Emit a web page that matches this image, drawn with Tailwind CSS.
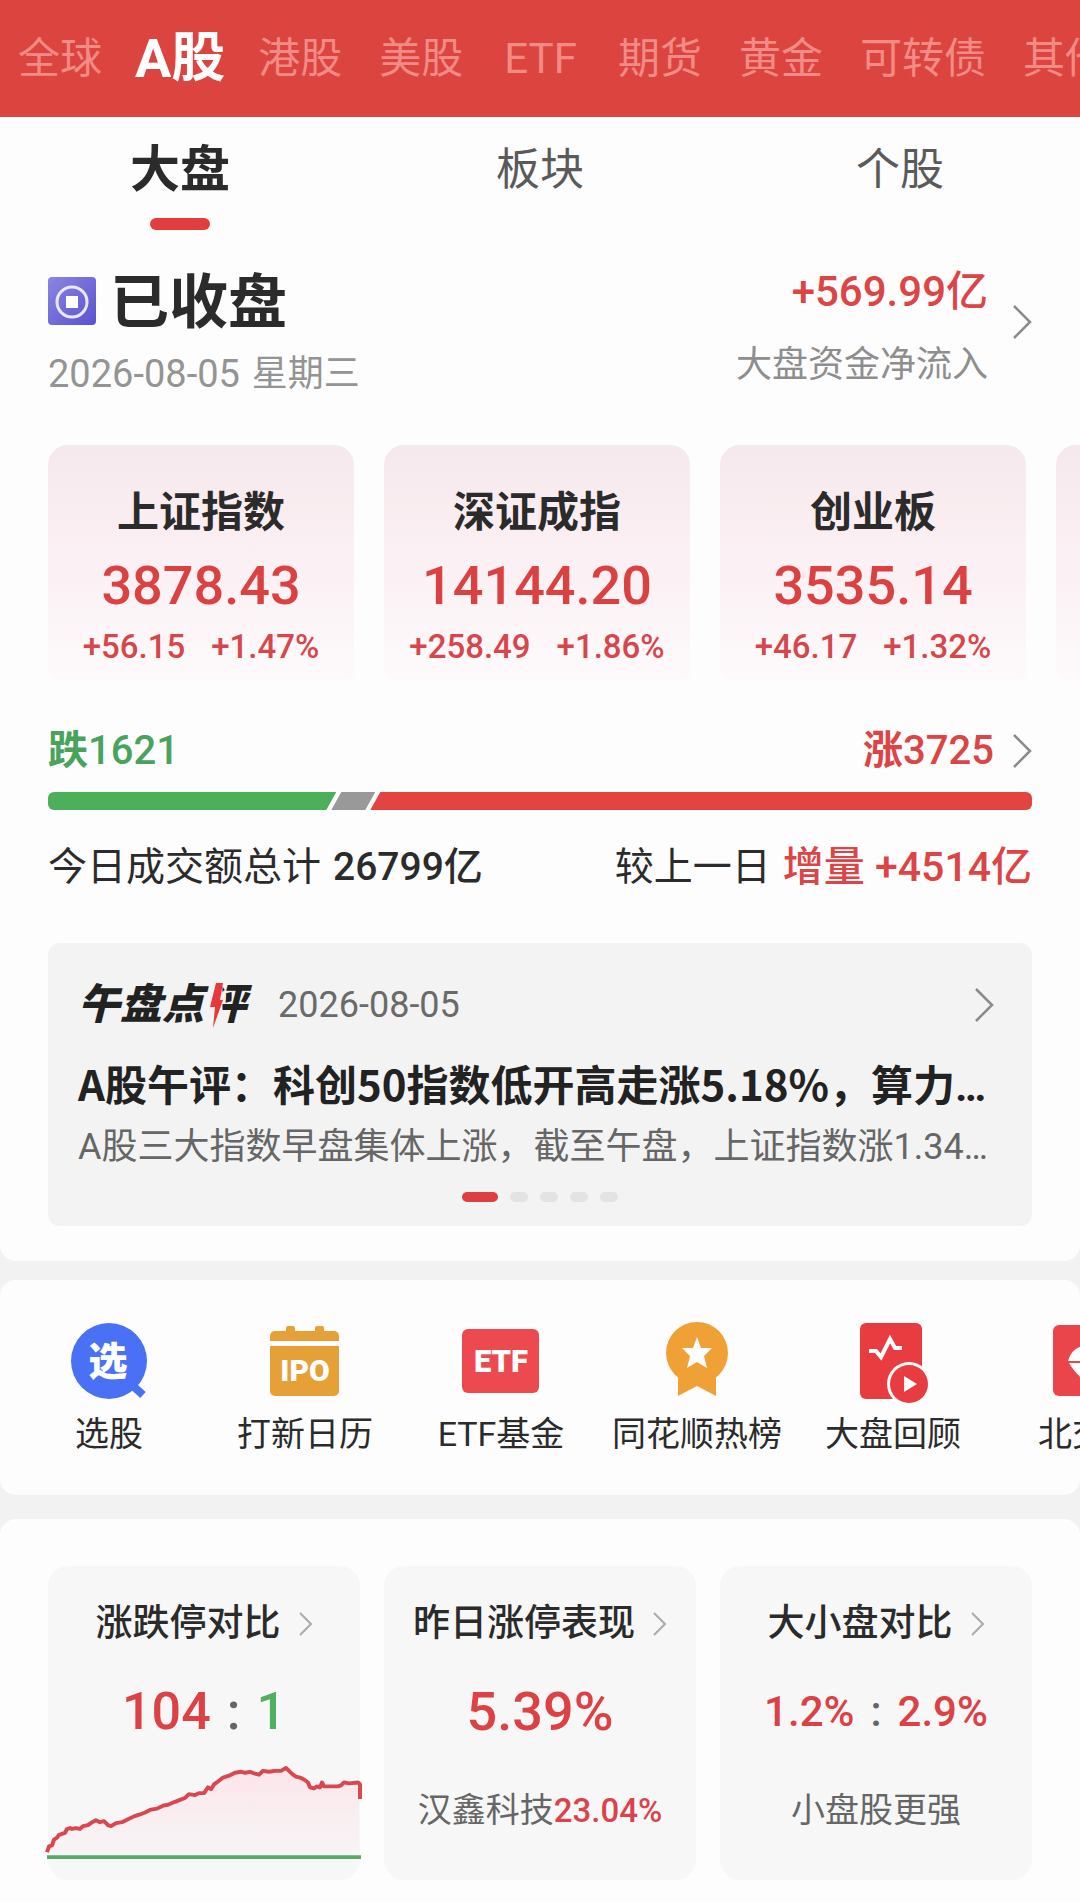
<!DOCTYPE html>
<html lang="zh-CN">
<head>
  <meta charset="UTF-8">
  <meta name="viewport" content="width=device-width, initial-scale=1.0">
  <title>A股行情</title>
  <script src="https://cdn.jsdelivr.net/npm/@tailwindcss/browser@4"></script>
</head>

<body class="min-h-screen bg-[#f2f2f2] text-[#2b2b2b] font-[Roboto,'Noto_Sans_CJK_SC',sans-serif] overflow-x-hidden">

  <!-- market nav -->
  <nav class="h-[117px] bg-[#dc4440] pl-[18px] flex items-center gap-[37px] overflow-hidden whitespace-nowrap text-[42px] text-[#f28b85]">
    <a href="#" class="shrink-0">全球</a>
    <a href="#" class="shrink-0 -mx-1 text-[54px] font-bold text-white">A股</a>
    <a href="#" class="shrink-0">港股</a>
    <a href="#" class="shrink-0">美股</a>
    <a href="#" class="shrink-0 px-1">ETF</a>
    <a href="#" class="shrink-0">期货</a>
    <a href="#" class="shrink-0">黄金</a>
    <a href="#" class="shrink-0">可转债</a>
    <a href="#" class="shrink-0">其他</a>
  </nav>

  <main>
    <section class="bg-[#fdfdfd] rounded-b-2xl pb-[35px]">
      <!-- tabs -->
      <div class="grid grid-cols-3 pt-[23px]">
        <button type="button" class="flex flex-col items-center text-[50px] leading-[60px] font-bold">
          大盘
          <span class="mt-[18px] w-[60px] h-3 rounded-full bg-[#e33e3d]"></span>
        </button>
        <button type="button" class="self-start text-[44px] leading-[60px] text-[#5a5a5a]">板块</button>
        <button type="button" class="self-start text-[44px] leading-[60px] text-[#5a5a5a]">个股</button>
      </div>

      <!-- market status -->
      <div class="px-12 pt-[38px] flex items-start justify-between">
        <div>
          <div class="flex items-center gap-[14px]">
            <svg class="w-12 h-[52px] pb-1" viewBox="0 0 48 48" fill="none">
              <defs>
                <linearGradient id="coin" x1="0" y1="0" x2="1" y2="1">
                  <stop offset="0" stop-color="#8a86e2"/>
                  <stop offset="1" stop-color="#5a52cf"/>
                </linearGradient>
              </defs>
              <rect width="48" height="48" rx="4" fill="url(#coin)"/>
              <circle cx="24" cy="25" r="15" stroke="#e9e8fb" stroke-width="3"/>
              <rect x="18" y="19" width="12" height="12" fill="#fff"/>
            </svg>
            <h1 class="text-[59px] leading-[70px] font-bold">已收盘</h1>
          </div>
          <p class="mt-4 flex gap-3 text-[38px] leading-10 text-[#949494]">
            <span>2026-08-05</span>
            <span class="text-[36px]">星期三</span>
          </p>
        </div>
        <a href="#" class="flex items-start gap-[25px]">
          <span class="block text-right">
            <span class="block text-[42px] leading-[48px] font-medium text-[#dc4446]">+569.99亿</span>
            <span class="block mt-[29px] text-[36px] leading-10 text-[#8e8e8e]">大盘资金净流入</span>
          </span>
          <svg class="mt-[37px] w-[19px] h-[34px]" viewBox="0 0 19 34" fill="none" stroke="#8a8a8a" stroke-width="2.5"><path d="M1 1l16 16L1 33"/></svg>
        </a>
      </div>

      <!-- index cards -->
      <div class="mt-[51px] pl-12 flex gap-[30px] overflow-hidden text-center">
        <a href="#" class="shrink-0 w-[306px] pt-[43px] pb-[13px] rounded-t-[20px] rounded-b-lg bg-linear-to-b from-[#f6e9ed] via-[#fbf0f3] to-[#fdfafb]">
          <h2 class="text-[42px] leading-[50px] font-bold">上证指数</h2>
          <p class="mt-[18px] text-[54px] leading-[60px] font-medium text-[#dc4142]">3878.43</p>
          <p class="mt-[11px] flex justify-center gap-[26px] text-[33px] leading-10 font-medium text-[#d6474c]"><span>+56.15</span><span>+1.47%</span></p>
        </a>
        <a href="#" class="shrink-0 w-[306px] pt-[43px] pb-[13px] rounded-t-[20px] rounded-b-lg bg-linear-to-b from-[#f6e9ed] via-[#fbf0f3] to-[#fdfafb]">
          <h2 class="text-[42px] leading-[50px] font-bold">深证成指</h2>
          <p class="mt-[18px] text-[54px] leading-[60px] font-medium text-[#dc4142]">14144.20</p>
          <p class="mt-[11px] flex justify-center gap-[26px] text-[33px] leading-10 font-medium text-[#d6474c]"><span>+258.49</span><span>+1.86%</span></p>
        </a>
        <a href="#" class="shrink-0 w-[306px] pt-[43px] pb-[13px] rounded-t-[20px] rounded-b-lg bg-linear-to-b from-[#f6e9ed] via-[#fbf0f3] to-[#fdfafb]">
          <h2 class="text-[42px] leading-[50px] font-bold">创业板</h2>
          <p class="mt-[18px] text-[54px] leading-[60px] font-medium text-[#dc4142]">3535.14</p>
          <p class="mt-[11px] flex justify-center gap-[26px] text-[33px] leading-10 font-medium text-[#d6474c]"><span>+46.17</span><span>+1.32%</span></p>
        </a>
        <div class="shrink-0 w-[306px] rounded-t-[20px] rounded-b-lg bg-linear-to-b from-[#f6e9ed] via-[#fbf0f3] to-[#fdfafb]"></div>
      </div>

      <!-- falling / rising -->
      <div class="px-12 mt-[47px]">
        <div class="flex items-center justify-between text-[40px] leading-[48px] font-medium">
          <span class="text-[#48a45c]"><b>跌</b>1621</span>
          <a href="#" class="flex items-center gap-[19px] text-[#dc4446]">
            <span><b>涨</b>3725</span>
            <svg class="w-[19px] h-[34px]" viewBox="0 0 19 34" fill="none" stroke="#8a8a8a" stroke-width="2.5"><path d="M1 1l16 16L1 33"/></svg>
          </a>
        </div>
        <div class="mt-[17px] h-[18px] flex rounded-md overflow-hidden">
          <div class="bg-[#4caf5a] [clip-path:polygon(0_0,100%_0,calc(100%-10px)_100%,0_100%)]" style="width: 29.3%"></div>
          <div class="-ml-[5px] w-[44px] bg-[#999] [clip-path:polygon(10px_0,100%_0,calc(100%-10px)_100%,0_100%)]"></div>
          <div class="-ml-[5px] flex-1 bg-[#e44440] [clip-path:polygon(10px_0,100%_0,100%_100%,0_100%)]"></div>
        </div>
        <div class="mt-8 flex justify-between text-[39px] leading-[50px]">
          <p class="flex gap-3">今日成交额总计 <span class="font-medium">26799亿</span></p>
          <p class="flex gap-3">较上一日 <span class="text-[41px] font-medium text-[#dc4446]">增量 +4514亿</span></p>
        </div>
      </div>

      <!-- midday review -->
      <article class="mx-12 mt-[51px] pt-[37px] pb-6 px-[30px] rounded-xl bg-[#f3f3f3]">
        <div class="flex items-center leading-[50px]">
          <h2 class="relative text-[42px] font-black italic text-[#222]">午盘点<span class="inline-block [clip-path:inset(0_-20%_0_44%)]">评</span>
            <svg class="absolute left-[130px] top-0 w-4 h-[50px]" viewBox="0 0 16 50" fill="#e8383c"><path d="M8 3h7l-3 17h3L5 48l2-21H2z"/></svg>
          </h2>
          <time class="ml-8 text-[36px] text-[#6a6a6a]">2026-08-05</time>
          <svg class="ml-auto mr-2 w-[19px] h-[34px]" viewBox="0 0 19 34" fill="none" stroke="#8a8a8a" stroke-width="2.5"><path d="M1 1l16 16L1 33"/></svg>
        </div>
        <h3 class="mt-7 h-[50px] text-[42px] leading-[50px] font-bold font-['Noto_Sans_CJK_SC',sans-serif] text-[#222] whitespace-nowrap">A股午评：科创50指数低开高走涨5.18%，算力<span class="font-[Roboto,sans-serif]">…</span></h3>
        <p class="mt-[17px] text-[36px] leading-[44px] text-[#666] whitespace-nowrap">A股三大指数早盘集体上涨，截至午盘，上证指数涨1.34…</p>
        <div class="mt-[23px] flex justify-center gap-3">
          <span class="w-9 h-[10px] rounded-full bg-[#dc3e42]"></span>
          <span class="w-[18px] h-[10px] rounded-full bg-[#e3e3e3]"></span>
          <span class="w-[18px] h-[10px] rounded-full bg-[#e3e3e3]"></span>
          <span class="w-[18px] h-[10px] rounded-full bg-[#e3e3e3]"></span>
          <span class="w-[18px] h-[10px] rounded-full bg-[#e3e3e3]"></span>
        </div>
      </article>
    </section>

    <!-- shortcuts -->
    <section class="mt-[19px] pt-10 pb-[41px] pl-[11px] bg-[#fdfdfd] rounded-2xl flex overflow-hidden whitespace-nowrap text-[34px] leading-10">
      <a href="#" class="shrink-0 w-[196px] flex flex-col items-center gap-[10px]">
        <svg class="w-20 h-[84px]" viewBox="0 0 80 84">
          <circle cx="40" cy="41" r="38" fill="#4a70f5"/>
          <path d="M63 65l11 10" stroke="#4a70f5" stroke-width="8"/>
          <text x="39" y="55" text-anchor="middle" font-size="39" font-weight="900" fill="#fff">选</text>
        </svg>
        选股
      </a>
      <a href="#" class="shrink-0 w-[196px] flex flex-col items-center gap-[10px]">
        <svg class="w-20 h-[84px]" viewBox="0 0 80 84">
          <g fill="#e5a038">
            <rect x="21" y="6" width="9" height="10" rx="2"/>
            <rect x="50" y="6" width="9" height="10" rx="2"/>
            <path d="M5 21v-5a5 5 0 0 1 5-5h59a5 5 0 0 1 5 5v5z"/>
            <path d="M5 26h69v45a5 5 0 0 1-5 5H10a5 5 0 0 1-5-5z"/>
          </g>
          <text x="40" y="61" text-anchor="middle" font-size="30" font-weight="900" fill="#fff">IPO</text>
        </svg>
        打新日历
      </a>
      <a href="#" class="shrink-0 w-[196px] flex flex-col items-center gap-[10px]">
        <svg class="w-20 h-[84px]" viewBox="0 0 80 84">
          <rect x="1" y="9" width="77" height="64" rx="6" fill="#ec4a4e"/>
          <text x="40" y="52" text-anchor="middle" font-size="31" font-weight="900" fill="#fff">ETF</text>
        </svg>
        ETF基金
      </a>
      <a href="#" class="shrink-0 w-[196px] flex flex-col items-center gap-[10px]">
        <svg class="w-20 h-[84px]" viewBox="0 0 80 84" fill="#f0a135">
          <circle cx="40" cy="33" r="31"/>
          <path d="M21 50h38v26L40 66 21 76z"/>
          <path d="M40 17l4 11 11 0-8 8 3 12-10-6-10 6 3-12-8-8 11 0z" fill="#fff"/>
        </svg>
        同花顺热榜
      </a>
      <a href="#" class="shrink-0 w-[196px] flex flex-col items-center gap-[10px]">
        <svg class="w-20 h-[84px]" viewBox="0 0 80 84">
          <rect x="7" y="3" width="62" height="76" rx="6" fill="#e93c40"/>
          <path d="M16 31h7l5 6 9-18 5 9h7" fill="none" stroke="#fff" stroke-width="4"/>
          <circle cx="56" cy="64" r="22" fill="#fdfdfd"/>
          <circle cx="56" cy="64" r="19" fill="#e93c40"/>
          <path d="M51 56l13 8-13 8z" fill="#fff"/>
        </svg>
        大盘回顾
      </a>
      <a href="#" class="shrink-0 w-[196px] flex flex-col items-center gap-[10px]">
        <svg class="w-20 h-[84px]" viewBox="0 0 80 84">
          <rect x="4" y="5" width="72" height="71" rx="6" fill="#ea454b"/>
          <path d="M19 41q4-15 21-16 17 1 21 16-8 15-21 22-13-7-21-22z" fill="#fff"/>
          <path d="M19 42h14M40 34a7 7 0 1 0 0 14" fill="none" stroke="#ea454b" stroke-width="2"/>
        </svg>
        北交所
      </a>
    </section>

    <!-- market statistics -->
    <section class="mt-6 px-12 pt-[47px] pb-[22px] bg-[#fdfdfd] rounded-t-2xl grid grid-cols-3 gap-6 text-center">
      <a href="#" class="pt-[34px] pb-5 rounded-[20px] bg-[#f7f7f7]">
        <h2 class="flex items-center justify-center gap-[18px] text-[37px] leading-[48px] font-medium">涨跌停对比
          <svg class="w-[14px] h-6" viewBox="0 0 14 24" fill="none" stroke="#aaa" stroke-width="2"><path d="M1 1l11 11L1 23"/></svg>
        </h2>
        <p class="mt-[34px] flex justify-center gap-4 text-[52px] leading-[60px] font-medium"><span class="text-[#dc4145]">104</span><span class="text-[#666]">:</span><span class="text-[#50b062]">1</span></p>
        <svg class="mt-[23px] block w-full h-[95px] overflow-visible" viewBox="0 0 312 98" preserveAspectRatio="none" fill="none">
          <defs>
            <linearGradient id="area" x1="0" y1="0" x2="0" y2="1">
              <stop offset="0" stop-color="#fbe6ea"/>
              <stop offset="1" stop-color="#f7f5f6"/>
            </linearGradient>
          </defs>
          <path d="M0 89L5 81 10 75 17 70 23 65 35 64 48 58 56 59 63 63 80 56 97 49 118 42 139 35 156 30 173 15 190 8 201 7 209 10 216 6 238 4 245 11 256 14 266 23 277 22 292 21 297 19 311 18V95H0z" fill="url(#area)"/>
          <path d="M-1 90L1 84 4 83 6 77 9 75 11 72 17 70 19 66 22 65 24 66 28 65 32 66 35 63 40 62 44 59 48 57 52 59 56 58 60 62 63 63 68 60 74 59 80 56 86 53 92 51 97 49 103 46 109 45 115 42 120 41 127 38 132 36 137 34 141 30 147 31 151 29 156 29 160 23 163 25 166 20 170 17 175 13 181 11 187 8 193 7 197 8 202 7 207 9 211 10 215 6 221 7 227 6 233 6 238 3 243 8 245 10 248 12 252 13 256 15 260 18 262 23 266 24 269 22 272 23 274 18 276 22 282 22 290 22 293 21 296 18 301 19 310 18 312 20V35" stroke="#d9484e" stroke-width="4" stroke-linejoin="round"/>
          <path d="M-1 95H313" stroke="#55ab66" stroke-width="4"/>
        </svg>
      </a>
      <a href="#" class="pt-[34px] rounded-[20px] bg-[#f7f7f7]">
        <h2 class="flex items-center justify-center gap-[18px] text-[37px] leading-[48px] font-medium">昨日涨停表现
          <svg class="w-[14px] h-6" viewBox="0 0 14 24" fill="none" stroke="#aaa" stroke-width="2"><path d="M1 1l11 11L1 23"/></svg>
        </h2>
        <p class="mt-[34px] text-[54px] leading-[60px] font-medium text-[#dc4145]">5.39%</p>
        <p class="mt-[46px] text-[34px] leading-[44px] text-[#666]">汉鑫科技<span class="text-[33px] font-medium text-[#d9444c]">23.04%</span></p>
      </a>
      <a href="#" class="pt-[34px] rounded-[20px] bg-[#f7f7f7]">
        <h2 class="flex items-center justify-center gap-[18px] text-[37px] leading-[48px] font-medium">大小盘对比
          <svg class="w-[14px] h-6" viewBox="0 0 14 24" fill="none" stroke="#aaa" stroke-width="2"><path d="M1 1l11 11L1 23"/></svg>
        </h2>
        <p class="mt-[34px] flex justify-center gap-4 text-[42px] leading-[60px] font-medium text-[#dc4145]"><span>1.2%</span><span class="text-[#666]">:</span><span>2.9%</span></p>
        <p class="mt-[46px] text-[34px] leading-[44px] text-[#666]">小盘股更强</p>
      </a>
    </section>
  </main>
</body>
</html>
